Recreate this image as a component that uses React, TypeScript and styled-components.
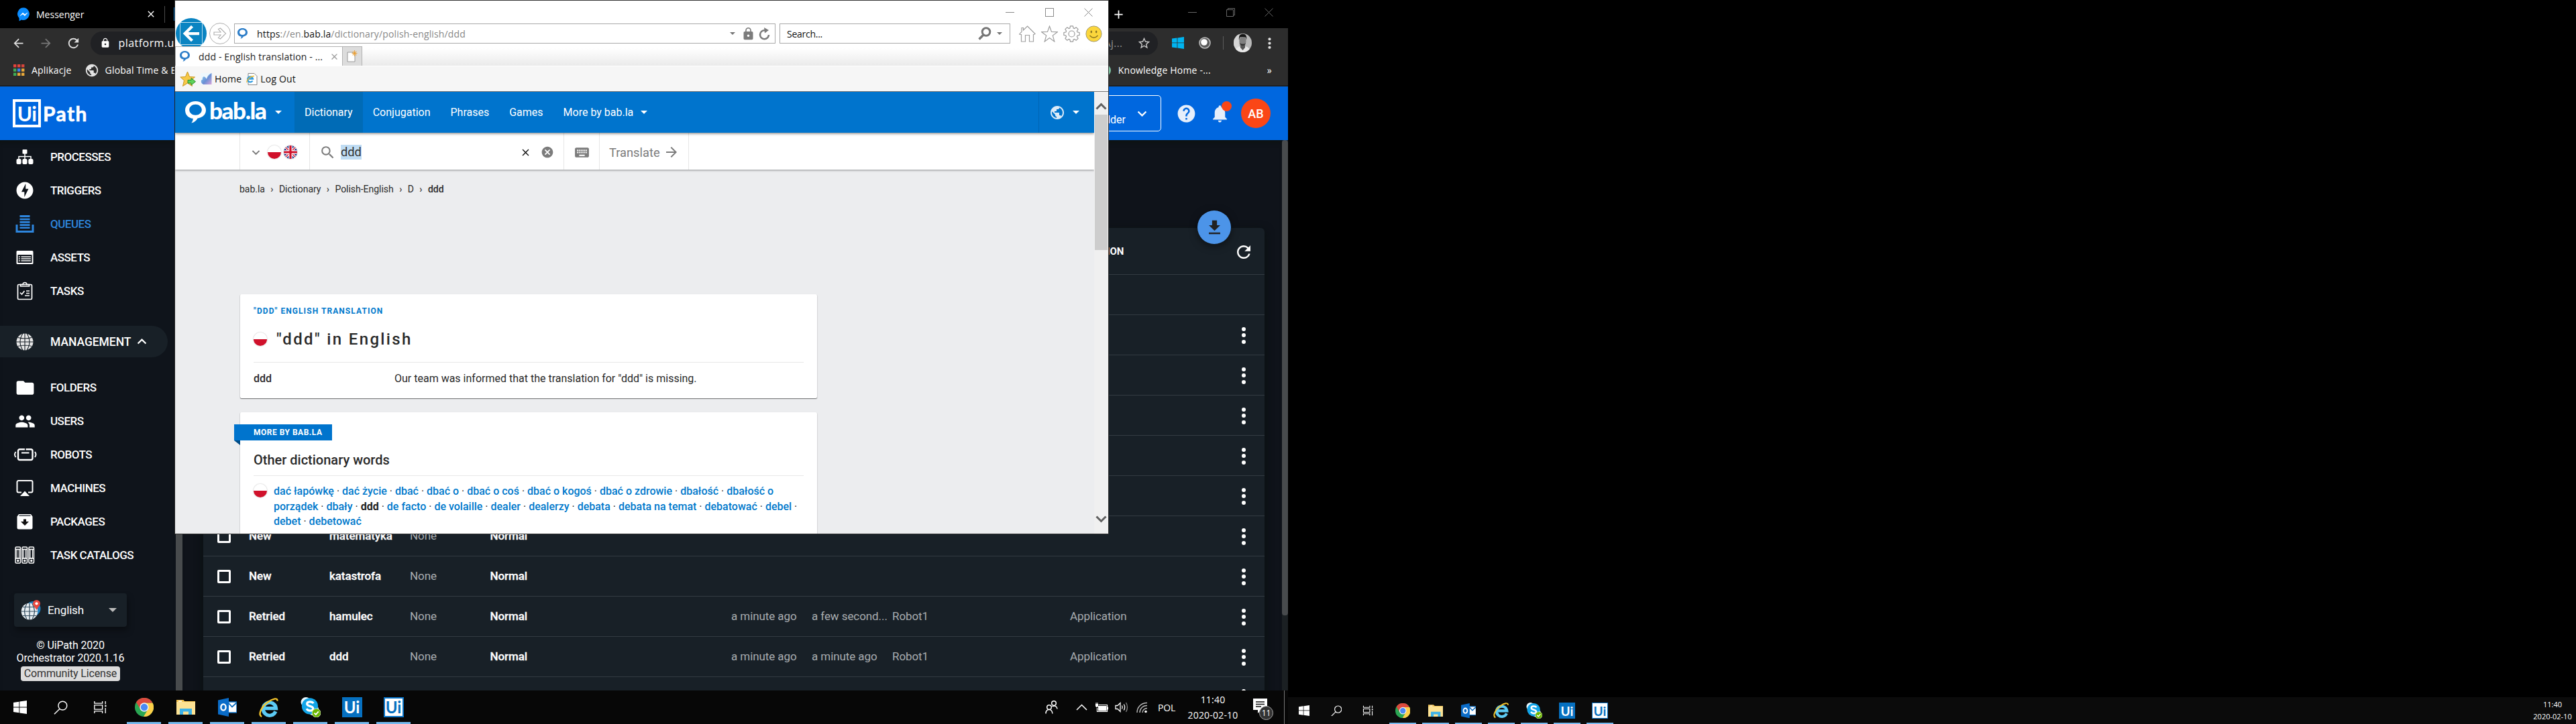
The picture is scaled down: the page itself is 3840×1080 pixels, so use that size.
import React from "react";
import styled, { createGlobalStyle, css } from "styled-components";
import {
  MdPublic,
  MdKeyboard,
  MdSearch,
  MdCancel,
  MdClose,
  MdArrowForward,
  MdArrowBack,
  MdKeyboardArrowDown,
  MdKeyboardArrowUp,
  MdHelp,
  MdNotifications,
  MdFolder,
  MdPeople,
  MdRefresh,
  MdGetApp,
  MdLock,
  MdStarBorder,
  MdMoreVert,
  MdOfflineBolt,
  MdAdd,
} from "react-icons/md";

const roboto = `Roboto, "Liberation Sans", sans-serif`;
const segoe = `"Open Sans", "Noto Sans", sans-serif`;

const GlobalStyle = createGlobalStyle`
  *, *::before, *::after { box-sizing: border-box; }
  body { margin: 0; background: #000; overflow: hidden; }
  svg { display: block; flex: none; }
`;

/* ---------- desktop ---------- */

const Desktop = styled.div`
  display: flex;
  width: 3840px;
  height: 1080px;
  background: #000;
  font-family: ${roboto};
  white-space: nowrap;
  cursor: default;
`;

const Monitor = styled.div`
  position: relative;
  display: flex;
  flex-direction: column;
  justify-content: flex-end;
  width: 1920px;
  height: 1080px;
  overflow: hidden;
`;

/* ---------- chrome window ---------- */

const ChromeWindow = styled.div`
  display: flex;
  flex-direction: column;
  height: 1030px;
  background: #0f131a;
  color: #fff;
`;

const ChromeTitle = styled.div`
  display: flex;
  align-items: center;
  height: 42px;
  background: #000;
  font: 14px ${segoe};
`;

const ChromeTab = styled.div`
  display: flex;
  align-items: center;
  width: 246px;
  height: 25px;
  padding-left: 26px;
  border-right: 1px solid #4a4a4a;
  svg:last-child {
    margin-left: auto;
    margin-right: 12px;
  }
`;

const TabLabel = styled.span`
  margin-left: 9px;
`;

const TabFavicon = styled.div`
  width: 16px;
  height: 20px;
  margin-left: 13px;
  background: #0a78c8;
`;

const NewTab = styled.div`
  display: flex;
  margin-left: auto;
  width: 92px;
`;

const ChromeControls = styled.div`
  display: flex;
  align-items: center;
  width: 171px;
  height: 36px;
  align-self: flex-start;
  justify-content: space-around;
  color: #666;
`;

const ChromeToolbar = styled.div`
  display: flex;
  align-items: center;
  height: 44px;
  padding-left: 17px;
  background: #2d2d2d;
  color: #dedede;
`;

const NavIcon = styled.div<{ $dim?: boolean }>`
  width: 40.5px;
  color: ${(p) => (p.$dim ? "#777" : "#dedede")};
`;

const UrlPill = styled.div`
  display: flex;
  align-items: center;
  width: 1591px;
  height: 35px;
  margin-left: -4px;
  padding: 0 10px 0 14px;
  border-radius: 18px;
  background: #202124;
  color: #fff;
  font: 16px ${segoe};
  letter-spacing: 0.45px;
`;

const UrlHost = styled.span`
  margin-left: 12px;
`;

const UrlTail = styled.span`
  margin: 0 21px 0 auto;
  color: #999;
  font-size: 15px;
`;

const Extensions = styled.div`
  display: flex;
  flex: 1;
  align-items: center;
  padding-left: 21px;
`;

const Separator = styled.div`
  width: 1px;
  height: 20px;
  margin: 0 15px 0 18px;
  background: #5c5c5c;
`;

const ExtensionSlot = styled.div<{ $gap: number }>`
  margin-left: ${(p) => p.$gap}px;
`;

const Bookmarks = styled.div`
  display: flex;
  align-items: center;
  height: 43px;
  padding: 0 24px 4px 20px;
  border-bottom: 2px solid #1f1f1f;
  background: #2d2d2d;
  font: 14px ${segoe};
  letter-spacing: 0.2px;
`;

const Bookmark = styled.div<{ $gap?: number; $push?: boolean }>`
  display: flex;
  align-items: center;
  gap: ${(p) => p.$gap ?? 10}px;
  margin-right: 19px;
  ${(p) =>
    p.$push &&
    css`
      margin-left: auto;
      margin-right: 84px;
    `}
`;

const GreenDot = styled.div`
  width: 18px;
  height: 18px;
  border-radius: 50%;
  background: #7cc0a0;
`;

/* ---------- UiPath page ---------- */

const PathHeader = styled.header`
  display: flex;
  align-items: center;
  height: 80px;
  padding: 0 26px 0 19px;
  background: #0067df;
`;

const PathLogo = styled.div`
  display: flex;
  align-items: center;
  color: #fff;
  font: 700 30px/1 Lato, sans-serif;
`;

const PathLogoBox = styled.div`
  display: flex;
  align-items: center;
  justify-content: center;
  width: 42px;
  height: 42px;
  border: 4px solid #fff;
  letter-spacing: -0.6px;
`;

const PathLogoName = styled.span`
  margin-left: 3px;
  font-weight: 700;
  letter-spacing: 1.4px;
  -webkit-text-stroke: 0.6px #fff;
`;

const FolderPicker = styled.div`
  display: flex;
  align-items: center;
  justify-content: flex-end;
  width: 170px;
  height: 54px;
  margin-left: auto;
  padding-right: 14px;
  border: 1px solid #fff;
  border-radius: 5px;
`;

const FolderName = styled.span`
  align-self: flex-end;
  margin: 0 11px 7px 0;
  font-size: 16px;
`;

const HeaderIcon = styled.div<{ $gap: number }>`
  position: relative;
  margin-left: ${(p) => p.$gap}px;
  color: #e6effb;
`;

const BellBadge = styled.div`
  position: absolute;
  top: -3px;
  right: -2px;
  width: 15px;
  height: 15px;
  border-radius: 50%;
  background: #fa4616;
`;

const Avatar = styled.div`
  display: flex;
  align-items: center;
  justify-content: center;
  width: 44px;
  height: 44px;
  margin-left: 16px;
  border-radius: 50%;
  background: #fa4616;
  font-size: 18px;
  font-weight: 500;
`;

const PathBody = styled.div`
  display: flex;
  flex: 1;
  min-height: 0;
`;

const Sidebar = styled.nav`
  width: 262px;
  background: #0f141b;
  box-shadow: inset 0 8px 8px -6px #0b1210;
`;

const NavItem = styled.div<{ $active?: boolean }>`
  display: flex;
  align-items: center;
  height: 50px;
  color: ${(p) => (p.$active ? "#2e86de" : "#fff")};
  font-size: 17px;
  font-weight: 500;
  letter-spacing: -0.5px;
`;

const NavGlyph = styled.div`
  display: flex;
  align-items: center;
  justify-content: center;
  width: 50px;
  margin: 0 13px 0 12px;
`;

const NavGroup = styled(NavItem)`
  width: 250px;
  height: 47px;
  margin: 27px 0 20px;
  border-radius: 0 24px 24px 0;
  background: #182027;
  font-size: 17.5px;
  letter-spacing: -0.05px;
`;

const LanguageBox = styled.div`
  display: flex;
  align-items: center;
  width: 168px;
  height: 50px;
  margin: 32px 0 0 21px;
  padding: 0 15px 0 10px;
  border-radius: 4px;
  background: #182027;
  box-shadow: 2px 6px 10px rgba(0, 0, 0, 0.35);
  font-size: 17px;
  letter-spacing: -0.15px;
`;

const LanguageName = styled.span`
  flex: 1;
  margin-left: 10px;
`;

const Legal = styled.div`
  display: flex;
  flex-direction: column;
  align-items: center;
  width: 210px;
  margin-top: 18px;
  font-size: 16px;
  line-height: 19px;
  letter-spacing: -0.15px;
`;

const License = styled.div`
  margin-top: 3px;
  padding: 0 5px;
  border-radius: 4px;
  background: #dcdcdc;
  color: #333;
  line-height: 22px;
`;

const ScrollTrack = styled.div<{ $w: number; $thumb: number; $round?: boolean }>`
  width: ${(p) => p.$w}px;
  background: #1b2023;
  &::before {
    content: "";
    display: block;
    height: ${(p) => p.$thumb}px;
    border-radius: ${(p) => (p.$round ? "4px" : "0")};
    background: #484b4d;
  }
`;

const Main = styled.main`
  flex: 1;
  padding: 131px 26px 0 31px;
  overflow: hidden;
  box-shadow: inset 0 8px 8px -6px #0b1210;
`;

const TableCard = styled.section`
  position: relative;
  height: 900px;
  border-radius: 6px;
  background: #182027;
  box-shadow: 0 4px 14px rgba(8, 16, 14, 0.8);
`;

const Fab = styled.div`
  position: absolute;
  top: -26px;
  right: 50px;
  display: flex;
  align-items: center;
  justify-content: center;
  width: 50px;
  height: 50px;
  border-radius: 50%;
  background: #4c94e8;
  box-shadow: 0 3px 12px rgba(0, 0, 0, 0.5);
  color: #222;
`;

const rowGrid = css`
  display: grid;
  grid-template-columns: 68px 120px 120px 119.5px 359.5px 120px 120px 265px 1fr 63px;
  align-items: center;
`;

const TableHead = styled.div`
  ${rowGrid}
  height: 70px;
  border-bottom: 1px solid #333b42;
  font-size: 15px;
  font-weight: 700;
`;

const HeadCell = styled.div`
  grid-column: 9;
`;

const HeadRefresh = styled.div`
  display: flex;
  grid-column: 10;
  justify-content: center;
  padding-top: 3px;
`;

const TableRow = styled.div`
  ${rowGrid}
  height: 60px;
  border-bottom: 1px solid #333b42;
  font-size: 17px;
  letter-spacing: -0.08px;
`;

const Check = styled.div`
  width: 20px;
  height: 20px;
  margin-left: 21px;
  border: 3px solid #fff;
  border-radius: 2px;
`;

const Cell = styled.div<{ $strong?: boolean }>`
  padding-bottom: 1px;
  color: ${(p) => (p.$strong ? "#fff" : "#a9adb0")};
  font-weight: ${(p) => (p.$strong ? 500 : 400)};
  -webkit-text-stroke: ${(p) => (p.$strong ? "0.3px #fff" : "0")};
`;

const RowMenu = styled.div`
  display: flex;
  flex-direction: column;
  align-items: center;
  gap: 3.5px;
  padding-top: 1px;
  i {
    width: 6px;
    height: 6px;
    border-radius: 50%;
    background: #fff;
  }
`;

/* ---------- internet explorer window ---------- */

const IeWindow = styled.div`
  position: absolute;
  left: 261px;
  top: 0;
  display: flex;
  flex-direction: column;
  width: 1391px;
  height: 797px;
  border-top: 1px solid #333;
  border-bottom: 1px solid #333;
  background: #fff;
  box-shadow: 1px 0 0 #333, -1px 0 0 #222;
`;

const IeTitle = styled.div`
  display: flex;
  align-items: center;
  justify-content: flex-end;
  gap: 45.5px;
  height: 34px;
  padding-right: 23px;
  color: #8a8a8a;
`;

const IeAddressRow = styled.div`
  display: flex;
  align-items: center;
  height: 34px;
  padding: 0 0 4px 1px;
  font: 14px ${segoe};
  letter-spacing: 0.15px;
`;

const BackButton = styled.div`
  display: flex;
  align-items: center;
  justify-content: center;
  width: 46px;
  height: 46px;
  margin: -8px 4px -8px 0;
  border-radius: 50%;
  background: #0a84c2;
`;

const ForwardButton = styled.div`
  display: flex;
  align-items: center;
  justify-content: center;
  width: 32px;
  height: 32px;
  margin-right: 5px;
  border: 1px solid #b0b0b0;
  border-radius: 50%;
`;

const IeField = styled.div<{ $w: number; $pad: number }>`
  display: flex;
  align-items: center;
  width: ${(p) => p.$w}px;
  height: 30px;
  margin-right: 6px;
  padding-left: ${(p) => p.$pad}px;
  border: 1px solid #aaa;
  color: #111;
`;

const IeUrl = styled.span`
  flex: 1;
  margin-left: 14px;
  color: #888;
  b {
    color: #111;
    font-weight: 400;
  }
`;

const IeHint = styled.span`
  flex: 1;
  letter-spacing: -0.26px;
`;

const IeTools = styled.div`
  display: flex;
  gap: 8px;
  margin-left: 7px;
`;

const IeTabRow = styled.div`
  position: relative;
  display: flex;
  height: 30px;
  border-bottom: 1px solid #fff;
  background: linear-gradient(#fff 10%, #eaeaea);
`;

const IeTab = styled.div`
  display: flex;
  align-items: center;
  width: 250px;
  padding: 0 4px 0 6px;
  border: 1px solid #b3b3b3;
  border-bottom: 0;
  background: #fff;
  color: #222;
  font: 14px ${segoe};
  letter-spacing: 0.14px;
`;

const IeTabText = styled.span`
  flex: 1;
  margin-left: 13px;
`;

const IeNewTab = styled.div`
  display: flex;
  align-items: center;
  justify-content: center;
  width: 29px;
  border: 1px solid #b3b3b3;
  border-left: 0;
  border-bottom: 0;
  background: #dcdcdc;
`;

const IeFavorites = styled.div`
  display: flex;
  align-items: center;
  height: 38px;
  padding-left: 7px;
  border-bottom: 1px solid #777;
  background: #f6f6f6;
  color: #111;
  font: 14px ${segoe};
  letter-spacing: 0.18px;
`;

const FavText = styled.span`
  margin: 0 7px 0 4px;
`;

const IeViewport = styled.div`
  display: flex;
  flex: 1;
  min-height: 0;
`;

const IePage = styled.div`
  flex: 1;
  overflow: hidden;
  background: #ecedef;
  color: #2a2a2a;
`;

const IeScroll = styled.div`
  display: flex;
  flex-direction: column;
  align-items: center;
  width: 21px;
  padding: 15px 0 15px;
  background: #f0f0f0;
`;

const IeThumb = styled.div`
  width: 19px;
  height: 202px;
  margin: 6px 0 auto;
  background: #cdcdcd;
`;

const LockGap = styled.div`
  margin: 0 5px 0 9px;
  color: #7c7c7c;
`;

const Spacer = styled.i<{ $w: number }>`
  flex: none;
  width: ${(p) => p.$w}px;
`;

/* ---------- bab.la page ---------- */

const BabNav = styled.div`
  position: relative;
  z-index: 2;
  display: flex;
  height: 61px;
  background: #0074cd;
  box-shadow: 0 1px 4px rgba(0, 0, 0, 0.55);
  color: #fff;
`;

const BabBrand = styled.div`
  display: flex;
  align-items: center;
  width: 178px;
  padding-left: 15px;
`;

const BabName = styled.span`
  flex: 1;
  margin: -6px 0 0 5px;
  font: 900 35px/1 Lato, sans-serif;
  letter-spacing: -1.4px;
`;

const BabLink = styled.div<{ $active?: boolean }>`
  display: flex;
  align-items: center;
  gap: 11px;
  padding: 0 15px;
  background: ${(p) => (p.$active ? "#006bb6" : "none")};
  font-size: 16px;
`;

const BabLocale = styled.div`
  display: flex;
  align-items: center;
  gap: 11px;
  width: 83px;
  margin-left: auto;
  padding-left: 15px;
  border-left: 1px solid #0064b4;
`;

const Triangle = styled.i<{ $c?: string; $s?: number; $end?: number }>`
  display: block;
  margin-right: ${(p) => p.$end ?? 0}px;
  border: ${(p) => p.$s ?? 5}px solid transparent;
  border-top-color: ${(p) => p.$c ?? "#fff"};
  border-bottom: 0;
`;

const SearchRow = styled.div`
  position: relative;
  display: flex;
  height: 55px;
  padding-left: 96px;
  background: #fff;
  box-shadow: 0 1px 3px rgba(0, 0, 0, 0.4);
`;

const SearchCell = styled.div<{ $w: number; $pad: number }>`
  display: flex;
  align-items: center;
  width: ${(p) => p.$w}px;
  padding: 3px 0 0 ${(p) => p.$pad}px;
  border-left: 1px solid #e6e6e6;
  color: #7c7c7c;
  font-size: 18.3px;
`;

const Selected = styled.span`
  flex: 1;
  margin-left: 7px;
  color: #333;
  span {
    display: inline-block;
    background: #bfdcf3;
    line-height: 22px;
  }
`;

const Flag = styled.svg`
  border-radius: 50%;
  box-shadow: 0 0 2px rgba(0, 0, 0, 0.35);
`;

const Crumbs = styled.div`
  display: flex;
  padding: 20px 0 0 96px;
  font-size: 14px;
  line-height: 18px;
  letter-spacing: -0.02px;
  span + span::before {
    content: "›";
    margin: 0 8.4px;
  }
  span:last-child {
    font-weight: 500;
  }
`;

const Card = styled.section<{ $top: number; $h: number }>`
  width: 860px;
  height: ${(p) => p.$h}px;
  margin: ${(p) => p.$top}px 0 0 97px;
  padding: 0 20px;
  border-radius: 2px;
  background: #fff;
  box-shadow: 0 1px 1px rgba(0, 0, 0, 0.4), 0 1px 2px rgba(0, 0, 0, 0.2);
`;

const CardTag = styled.div`
  padding-top: 17px;
  color: #0079cc;
  font-size: 12px;
  font-weight: 700;
  line-height: 16px;
  letter-spacing: 1.07px;
`;

const CardTitle = styled.h1`
  display: flex;
  align-items: center;
  gap: 14px;
  height: 69px;
  margin: 0;
  border-bottom: 1px solid #e8e8e8;
  font-size: 24px;
  font-weight: 500;
  letter-spacing: 2.35px;
`;

const Definition = styled.div`
  display: grid;
  grid-template-columns: 210px 1fr;
  padding-top: 14px;
  font-size: 16px;
  line-height: 20px;
  b {
    font-weight: 500;
  }
`;

const Ribbon = styled.div`
  position: relative;
  width: 146px;
  height: 24px;
  margin: 18px 0 0 -29px;
  padding-left: 29px;
  background: #0074cd;
  color: #fff;
  font-size: 12px;
  font-weight: 700;
  line-height: 24px;
  letter-spacing: 0.5px;
  &::after {
    content: "";
    position: absolute;
    left: 0;
    top: 24px;
    border-top: 7px solid #004c86;
    border-left: 9px solid transparent;
  }
`;

const RibbonCard = styled(Card)`
  display: flow-root;
`;

const WordsTitle = styled.h2`
  height: 53px;
  margin: 0;
  padding-top: 17px;
  border-bottom: 1px solid #e8e8e8;
  font-size: 20px;
  font-weight: 500;
  line-height: 24px;
`;

const WordList = styled.div`
  display: grid;
  grid-template-columns: 30px 1fr;
  padding-top: 12px;
  font-size: 16px;
  line-height: 22.7px;
`;

const Word = styled.span<{ $current?: boolean }>`
  color: ${(p) => (p.$current ? "#222" : "#0079cc")};
  font-weight: ${(p) => (p.$current ? 700 : 500)};
`;

/* ---------- taskbar ---------- */

const Taskbar = styled.div<{ $small?: boolean }>`
  display: flex;
  height: ${(p) => (p.$small ? 40 : 50)}px;
  background: ${(p) => (p.$small ? "#0b0b0b" : "#070707")};
  color: #fff;
  font-family: ${segoe};
`;

const SystemButton = styled.div<{ $small?: boolean }>`
  display: flex;
  align-items: center;
  justify-content: center;
  width: ${(p) => (p.$small ? 48 : 60)}px;
  &:nth-child(3) {
    width: ${(p) => (p.$small ? 46 : 58)}px;
  }
`;

const AppButton = styled.div<{ $small?: boolean }>`
  display: flex;
  align-items: center;
  justify-content: center;
  width: ${(p) => (p.$small ? 40 : 51)}px;
  margin-left: ${(p) => (p.$small ? 9 : 11)}px;
  border-bottom: ${(p) => (p.$small ? 2 : 3)}px solid #76b9ed;
  padding-top: ${(p) => (p.$small ? 2 : 3)}px;
`;

const UiTile = styled.div<{ $small?: boolean; $light?: boolean }>`
  display: flex;
  align-items: center;
  justify-content: center;
  width: ${(p) => (p.$small ? 24 : 30)}px;
  height: ${(p) => (p.$small ? 24 : 30)}px;
  border: ${(p) => (p.$light ? (p.$small ? 1.5 : 2) : 0)}px solid #0a74c8;
  background: ${(p) => (p.$light ? "#fff" : "#0670c0")};
  color: ${(p) => (p.$light ? "#0670c0" : "#fff")};
  font: 700 ${(p) => (p.$small ? 19 : 24)}px/1 Lato, sans-serif;
`;

const Tray = styled.div`
  display: flex;
  align-items: center;
  margin-left: auto;
  font-size: 14px;
`;

const TrayIcon = styled.div<{ $gap: number }>`
  margin-left: ${(p) => p.$gap}px;
`;

const InputLang = styled.div`
  margin-left: 15px;
  letter-spacing: -0.2px;
`;

const Clock = styled.div<{ $small?: boolean }>`
  width: ${(p) => (p.$small ? 70 : 112)}px;
  font-size: ${(p) => (p.$small ? 11 : 14)}px;
  line-height: ${(p) => (p.$small ? 18 : 23)}px;
  letter-spacing: ${(p) => (p.$small ? 0 : 0.2)}px;
  text-align: center;
`;

const Notifications = styled.div`
  position: relative;
  width: 46px;
  margin-top: -4px;
`;

const NotifCount = styled.div`
  position: absolute;
  left: 9px;
  top: 11px;
  width: 21px;
  height: 21px;
  border: 1px solid #aaa;
  border-radius: 50%;
  background: #333;
  font-size: 12px;
  line-height: 19px;
  text-align: center;
`;

const ShowDesktop = styled.div`
  align-self: stretch;
  width: 6px;
  border-left: 1px solid #777;
`;

/* ---------- icons ---------- */

const MessengerIcon = () => (
  <svg width="19" height="21" viewBox="0 0 19 21">
    <path d="M9.5 0.5A9 9.3 0 0 0 2.6 16.2V20.5L6 18.6A9 9.3 0 1 0 9.5 .5z" fill="#0a8cff" />
    <path d="M4 12.5 8 8l3 2.6L15 8l-4 4.7-3-2.7z" fill="#fff" stroke="#fff" strokeWidth=".6" />
  </svg>
);

const AppsIcon = () => {
  const c = ["#e5433b", "#e5433b", "#d8453c", "#3fae55", "#3b82f0", "#e8a93a", "#3fae55", "#e8a93a", "#e8a93a"];
  return (
    <svg width="17" height="17" viewBox="0 0 17 17">
      {c.map((f, i) => (
        <rect key={i} x={(i % 3) * 6} y={Math.floor(i / 3) * 6.3} width="4.4" height="4.4" fill={f} />
      ))}
    </svg>
  );
};

const WinLogo = ({ s, c = "#fff" }: { s: number; c?: string }) => (
  <svg width={s} height={s} viewBox="0 0 20 20" fill={c}>
    <path d="M0 2.9 8.4 1.7V9.5H0zM9.3 1.6 20 0V9.5H9.3zM0 10.4H8.4V18.3L0 17.1zM9.3 10.4H20V20L9.3 18.4z" />
  </svg>
);

const OrbIcon = () => (
  <svg width="18" height="18" viewBox="0 0 18 18">
    <circle cx="9" cy="9" r="8" fill="#5b5b5b" stroke="#b8b8b8" strokeWidth="1.6" />
    <circle cx="8" cy="8" r="4.8" fill="#fff" />
  </svg>
);

const PhotoIcon = () => (
  <svg width="27" height="28" viewBox="0 0 27 28">
    <defs>
      <clipPath id="photo">
        <ellipse cx="13.5" cy="14" rx="13.5" ry="14" />
      </clipPath>
    </defs>
    <g clipPath="url(#photo)">
      <rect width="27" height="28" fill="#b9b9b9" />
      <rect width="8" height="28" fill="#d5d5d5" />
      <path d="M2 28c0-6 4-8 8-9l3 3 4-3c4 1 8 3 8 9z" fill="#e8e8e8" />
      <path d="M10 16h7v5l-3.5 4L10 21z" fill="#555" />
      <ellipse cx="13.5" cy="11.5" rx="5" ry="7.5" fill="#808080" />
      <path d="M8 10C7 2 11 .5 14 .8c4 0 6 3 5 9l-1-4c-3-1-7-1-9 0z" fill="#151515" />
      <path d="M9 14c1 6 8 6 9 0-1 2-7 2-9 0z" fill="#333" />
    </g>
  </svg>
);

const BabBubble = ({ w, c }: { w: number; c: string }) => (
  <svg width={w} height={(w * 33) / 31} viewBox="0 0 31 33">
    <path
      fill={c}
      fillRule="evenodd"
      d="M15.5 0C24 0 31 5.6 31 13.2 31 21 24.500 24.500 18.500 25.600 17 28.500 14 31.600 9.200 32.600 11 30.500 11.800 28 11.600 25.800 5 25 0 20.500 0 13.200 0 5.600 7 0 15.500 0zM15.500 4.700C10.500 4.700 6.200 8 6.200 12.800c0 4.700 4.300 8 9.300 8s9.300-3.300 9.300-8c0-4.800-4.300-8.100-9.300-8.100z"
    />
  </svg>
);

const PlFlag = () => (
  <Flag width="20" height="20" viewBox="0 0 20 20">
    <rect width="20" height="20" fill="#fff" />
    <rect y="10" width="20" height="10" fill="#d0112b" />
  </Flag>
);

const UkFlag = () => (
  <Flag width="20" height="20" viewBox="0 0 20 20">
    <rect width="20" height="20" fill="#1c2f83" />
    <path d="M0 0 20 20M20 0 0 20" stroke="#fff" strokeWidth="3.6" />
    <path d="M0 0 20 20M20 0 0 20" stroke="#d0112b" strokeWidth="1.3" />
    <path d="M10 0V20M0 10H20" stroke="#fff" strokeWidth="5.6" />
    <path d="M10 0V20M0 10H20" stroke="#d0112b" strokeWidth="3.2" />
  </Flag>
);

const ProcessesIcon = () => (
  <svg width="26" height="24" viewBox="0 0 26 24" fill="#fff">
    <rect x="9.5" y="1" width="7" height="6.5" rx="1" />
    <rect x="0.5" y="15" width="7.2" height="8" rx="2" />
    <rect x="9.4" y="15" width="7.2" height="8" rx="2" />
    <rect x="18.3" y="15" width="7.2" height="8" rx="2" />
    <path d="M13 7v8M4 15.5V11.5H22V15.5" fill="none" stroke="#fff" strokeWidth="1.5" />
  </svg>
);

const QueuesIcon = () => (
  <svg width="28" height="28" viewBox="0 0 28 28" fill="#2e86de">
    <path d="M6.500 1H21.500v3H6.500zM6.500 5.700H21.500v2.700H6.500zM6.500 10H21.500v2.700H6.500zM6.500 14.300H21.500v2.700H6.500zM6.500 18.600H21.500v2.400H6.500z" />
    <path d="M2 15V25.500H26V15" fill="none" stroke="#2e86de" strokeWidth="3" />
  </svg>
);

const AssetsIcon = () => (
  <svg width="26" height="22" viewBox="0 0 26 22">
    <path
      fill="#fff"
      fillRule="evenodd"
      d="M2 1h22a1.500 1.500 0 0 1 1.500 1.500v17A1.500 1.500 0 0 1 24 21H2A1.500 1.500 0 0 1 .5 19.500v-17A1.500 1.500 0 0 1 2 1zM2.500 7v12h21V7z"
    />
    <path d="M4 10h1.800M4 13h1.800M4 16h1.800M7.500 10H22M7.500 13H22M7.500 16H22" stroke="#fff" strokeWidth="1.3" />
  </svg>
);

const TasksIcon = () => (
  <svg width="24" height="28" viewBox="0 0 24 28" fill="none" stroke="#fff" strokeWidth="1.7">
    <rect x="1.5" y="4.5" width="21" height="22" rx="1.5" />
    <path d="M5.500 7V4.500H9a3 3 0 0 1 6 0h3.500V7z" />
    <path d="M5 16.500 7.500 19 11.500 14M14 14h5M14 17.500h5M12 21h7" />
  </svg>
);

const GlobeIcon = () => (
  <svg width="26" height="26" viewBox="0 0 26 26">
    <circle cx="13" cy="13" r="12.5" fill="#e6e6e6" />
    <path
      d="M13 0V26M0 13H26M2.500 6.500Q13 9.500 23.500 6.500M2.500 19.500Q13 16.500 23.500 19.500M10 .5Q2 13 10 25.500M16 .5Q24 13 16 25.500"
      fill="none"
      stroke="#182027"
      strokeWidth="1.1"
    />
  </svg>
);

const RobotIcon = () => (
  <svg width="35" height="20" viewBox="0 0 35 20" fill="none" stroke="#fff" strokeWidth="2.4">
    <rect x="7" y="2.2" width="21.5" height="15.8" rx="2.5" />
    <path d="M12 7.500H23.500" strokeWidth="2" />
    <path d="M3.500 6Q.5 10 3.500 14M32 6Q35 10 32 14" strokeWidth="1.9" />
    <path d="M17.700 0V4" stroke="#0f141b" strokeWidth="1.5" />
  </svg>
);

const MachinesIcon = () => (
  <svg width="26" height="26" viewBox="0 0 26 26">
    <path d="M8 19.500H3.500A2 2 0 0 1 1.500 17.500V4A2 2 0 0 1 3.500 2H22.500A2 2 0 0 1 24.500 4V17.500A2 2 0 0 1 22.500 19.500H18" fill="none" stroke="#fff" strokeWidth="2" />
    <path d="M13 17.500 20 25H6z" fill="#fff" />
  </svg>
);

const PackagesIcon = () => (
  <svg width="24" height="24" viewBox="0 0 24 24">
    <path d="M3 1H21L23.500 4.500V21a2.500 2.500 0 0 1-2.500 2.500H3A2.500 2.500 0 0 1 .5 21V4.500z" fill="#fff" />
    <path d="M3.500 3.200H20.500" stroke="#182027" strokeWidth="1.2" />
    <path d="M10 8.500h4v3.500h4L12 18 6 12h4z" fill="#111" />
  </svg>
);

const CatalogsIcon = () => (
  <svg width="30" height="26" viewBox="0 0 30 26" fill="none" stroke="#fff" strokeWidth="1.5">
    {[1, 11, 21].map((x) => (
      <g key={x}>
        <rect x={x} y="1" width="7.5" height="24" rx="1.5" />
        <path d={`M${x} 4.500h7.500M${x} 18h7.500`} />
        <rect x={x + 2} y="4.5" width="3.5" height="13" strokeWidth="1.2" />
        <circle cx={x + 3.75} cy="21.4" r="1" />
      </g>
    ))}
  </svg>
);

const LanguageIcon = () => (
  <svg width="30" height="30" viewBox="0 0 30 30">
    <circle cx="18.5" cy="13" r="11" fill="#1d7fc0" />
    <circle cx="13" cy="17" r="12.3" fill="#e8eef2" />
    <path d="M13 5V29M1 17H25M3 10.500H22M3 23.500H23M9 5.500Q2 17 9 28.500M17 5.500Q24 17 17 28.500" fill="none" stroke="#314a5c" strokeWidth="1.2" />
    <path d="M23.500 15C20 9 18 8 18 5.300a5.500 5.300 0 0 1 11 0C29 8 27 9 23.500 15z" fill="#e8483f" />
    <circle cx="23.5" cy="5.3" r="2.1" fill="#fff" />
  </svg>
);

const MinIcon = () => (
  <svg width="13" height="13" viewBox="0 0 13 13" stroke="currentColor">
    <path d="M0 6.500H13" />
  </svg>
);
const MaxIcon = () => (
  <svg width="13" height="13" viewBox="0 0 13 13" stroke="currentColor" fill="none">
    <rect x=".5" y=".5" width="12" height="12" />
  </svg>
);
const RestoreIcon = () => (
  <svg width="13" height="13" viewBox="0 0 13 13" stroke="currentColor" fill="none">
    <path d="M.5 2.500H10.500V12.500H.5zM2.500 2.500V.5H12.500V10.500H10.500" />
  </svg>
);
const CrossIcon = () => (
  <svg width="13" height="13" viewBox="0 0 13 13" stroke="currentColor">
    <path d="M.5.5 12.500 12.500M12.500.5.5 12.500" />
  </svg>
);

const LensIcon = () => (
  <svg width="20" height="20" viewBox="0 0 20 20" fill="none" stroke="#777">
    <circle cx="12" cy="7.5" r="5.8" strokeWidth="3" />
    <path d="M8 12 1.500 18.500" strokeWidth="3.4" />
  </svg>
);

const ReloadIcon = () => (
  <svg width="17" height="19" viewBox="0 0 17 19" fill="none">
    <path d="M9 4.300A6.500 6.500 0 1 0 15 11" stroke="#7c7c7c" strokeWidth="2.6" />
    <path d="M8 0 15 4 9 8.500z" fill="#7c7c7c" />
  </svg>
);

const HomeOutline = () => (
  <svg width="25" height="25" viewBox="0 0 25 25" fill="none" stroke="#a0a0a0" strokeWidth="1.2">
    <path d="M12.500 1 24 12.500 22.500 13.500H21.500V24H15.500V14.500H9.500V24H3.500V13.500H1L.8 12.600 4 9.500V3.500H6.500V7z" />
  </svg>
);
const StarOutline = () => (
  <svg width="25" height="25" viewBox="0 0 25 25" fill="none" stroke="#a0a0a0" strokeWidth="1.2">
    <path d="M12.500 1 15.500 9.500 24.300 9.700 17.300 15 19.800 24 12.500 18.600 5.200 24 7.700 15 .7 9.700 9.500 9.500z" />
  </svg>
);
const GearOutline = () => {
  const pts: string[] = [];
  for (let i = 0; i < 8; i++) {
    const a = (i * Math.PI) / 4;
    [[-0.29, 9], [-0.17, 11.8], [0.17, 11.8], [0.29, 9]].forEach(([d, r]) =>
      pts.push(`${(12.5 + r * Math.sin(a + d)).toFixed(2)},${(12.5 - r * Math.cos(a + d)).toFixed(2)}`)
    );
  }
  return (
    <svg width="25" height="25" viewBox="0 0 25 25" fill="none" stroke="#999" strokeWidth="1.2">
      <polygon points={pts.join(" ")} strokeLinejoin="round" />
      <circle cx="12.5" cy="12.5" r="4.5" />
    </svg>
  );
};
const SmileyIcon = () => (
  <svg width="25" height="25" viewBox="0 0 25 25">
    <circle cx="12.5" cy="12.5" r="11.6" fill="#fbd63c" stroke="#a39a70" />
    <ellipse cx="8.8" cy="9.5" rx="1.2" ry="2" fill="#8a7420" />
    <ellipse cx="16.2" cy="9.5" rx="1.2" ry="2" fill="#8a7420" />
    <path d="M6.500 15Q12.500 21.500 18.500 15" fill="none" stroke="#8a7420" strokeWidth="1.4" />
  </svg>
);

const ForwardOutline = () => (
  <svg width="20" height="18" viewBox="0 0 20 18" fill="none" stroke="#b0b0b0" strokeWidth="1.2">
    <path d="M1 7H11L7.500 2.500 10.500 1 18.500 9 10.500 17 7.500 15.500 11 11H1z" />
  </svg>
);

const NewTabIcon = () => (
  <svg width="16" height="18" viewBox="0 0 16 18">
    <path d="M1 3H8L12 7V17H1z" fill="#fff" stroke="#999" />
    <path d="M11.500 0V9M7.500 4.500H15.500M8.700 1.700 14.300 7.300M14.300 1.700 8.700 7.300" stroke="#e8a13c" strokeWidth="1.1" />
  </svg>
);

const FavStar = () => (
  <svg width="24" height="24" viewBox="0 0 24 24">
    <path d="M11.500 1 14.500 8.500 22.500 9 16.500 14 18.500 22.500 11.500 18 4.500 22.500 6.500 14 .8 9 8.500 8.500z" fill="#f7c948" stroke="#c99722" />
    <path d="M12 13.500h5V10.500L23.500 15.700 17 21V18H12z" fill="#5fd35a" stroke="#2c8f2e" />
  </svg>
);
const HomeLink = () => (
  <svg width="17" height="17" viewBox="0 0 17 17">
    <defs>
      <linearGradient id="petal" x1="0" y1="0" x2="1" y2="1">
        <stop offset="0" stopColor="#8fdcf8" />
        <stop offset=".55" stopColor="#6a8fd4" />
        <stop offset="1" stopColor="#d9a6dc" />
      </linearGradient>
    </defs>
    <rect width="17" height="17" fill="#eef8fd" />
    <path d="M16.500 0V17H4C0 15 0 10 3 9.500 2 6 5 2 9 9 10 5 12 2 16.500 0z" fill="url(#petal)" />
  </svg>
);
const IePageIcon = () => (
  <svg width="17" height="18" viewBox="0 0 17 18">
    <path d="M3 .5H12L16 4.500V17.500H3z" fill="#fff" stroke="#888" />
    <path d="M9.500 11.500A4 4 0 1 1 10 8.500H3" fill="none" stroke="#2e9be0" strokeWidth="2.3" />
    <path d="M1 14C0 10 7 4 12 4.500" fill="none" stroke="#f0b92c" strokeWidth="1.4" />
  </svg>
);

const ScrollChevron = ({ up }: { up?: boolean }) => (
  <svg width="17" height="13" viewBox="0 0 17 13">
    <path d={up ? "M1.500 10.500 8.500 3.500 15.500 10.500" : "M1.500 2.500 8.500 9.500 15.500 2.500"} fill="none" stroke="#606060" strokeWidth="3" />
  </svg>
);

/* taskbar glyphs */

type Sized = { s: number };
const TaskSearch = ({ s }: Sized) => (
  <svg width={s} height={s} viewBox="0 0 22 22" fill="none" stroke="#fff" strokeWidth="1.5">
    <circle cx="14" cy="8" r="6.7" />
    <path d="M9.300 13 1 21.300" />
  </svg>
);
const TaskView = ({ s }: Sized) => (
  <svg width={s} height={s} viewBox="0 0 22 22" fill="none" stroke="#fff" strokeWidth="1.5">
    <path d="M2 1V4.500H15V1M2 21V17.500H15V21M2 7.500H15V14.500H2zM20 1V6M20 12V21" />
    <rect x="19" y="7.5" width="2.4" height="2.6" fill="#fff" stroke="none" />
  </svg>
);
const ChromeIcon = ({ s }: Sized) => (
  <svg width={s} height={s} viewBox="2 2 28 28">
    <circle cx="16" cy="16" r="14" fill="#2aa653" />
    <path d="M16 9.600H28.450A14 14 0 0 1 15 30L21.500 19.200z" fill="#fdd049" />
    <path d="M28.450 9.600A14 14 0 0 0 4 8.600L10.460 19.200 16 9.600z" fill="#dc4a3e" />
    <circle cx="16" cy="16" r="6.7" fill="#f4f4f4" />
    <circle cx="16" cy="16" r="5.2" fill="#4a8af4" />
  </svg>
);
const FolderIcon = ({ s }: Sized) => (
  <svg width={s} height={s} viewBox="0 0 28 28">
    <path d="M0 3H10L12 5H28V25H0z" fill="#fde293" />
    <path d="M0 3H10L12 5H28V6H0z" fill="#f2c14c" />
    <path d="M3 5H8" stroke="#fff" strokeWidth="1.5" />
    <path d="M5 25V16H23V25H18V20.500H10V25z" fill="#3db2e8" />
  </svg>
);
const OutlookIcon = ({ s }: Sized) => (
  <svg width={s} height={s} viewBox="0 0 28 28">
    <path d="M14 6H28V22H14z" fill="#fff" stroke="#0a6cc0" strokeWidth="1.5" />
    <path d="M15 7 21 13.500 28 7" fill="none" stroke="#0a6cc0" strokeWidth="1.8" />
    <path d="M0 3.500 16 0V28L0 24.500z" fill="#0a6cc8" />
    <ellipse cx="8" cy="14" rx="3.6" ry="4.6" fill="none" stroke="#fff" strokeWidth="2.4" />
  </svg>
);
const IeIcon = ({ s }: Sized) => (
  <svg width={s} height={s} viewBox="0 0 28 28" fill="none">
    <path d="M24 19.500A9.300 9.300 0 1 1 24.600 15H8" stroke="#5ccbf5" strokeWidth="5" />
    <path d="M4 27C-2 24 4 12 13 6 19 1.500 27 -1 26.500 4.500" stroke="#f5c52c" strokeWidth="2.3" />
  </svg>
);
const SkypeIcon = ({ s }: Sized) => (
  <svg width={s} height={s} viewBox="0 0 28 28">
    <circle cx="7.5" cy="7" r="7" fill="#e9f7fd" />
    <circle cx="18" cy="18" r="7.5" fill="#e9f7fd" />
    <circle cx="13" cy="12.5" r="11.3" fill="#12a5e8" />
    <path d="M18 8.500C16 5.500 9 5.500 9 9.300 9 13.500 17.500 11.500 17.500 15.800 17.500 20 10 19.500 8.500 16" fill="none" stroke="#fff" strokeWidth="3" />
    <circle cx="22" cy="22" r="6" fill="#6bb700" stroke="#dff0c0" strokeWidth=".8" />
    <path d="M19 22 21.300 24.200 25 20" fill="none" stroke="#fff" strokeWidth="1.7" />
  </svg>
);

const PeopleTray = () => (
  <svg width="19" height="20" viewBox="0 0 19 20" fill="none" stroke="#fff" strokeWidth="1.5">
    <circle cx="13" cy="4" r="3.3" />
    <circle cx="6" cy="10" r="3.3" />
    <path d="M1 19.500C1 15.500 3 13.500 6 13.500S10.500 15.500 11 19.500M10.500 9C14 6.500 17.500 8.500 18 12.500" />
  </svg>
);
const ChevronTray = () => (
  <svg width="17" height="10" viewBox="0 0 17 10" fill="none" stroke="#fff" strokeWidth="1.5">
    <path d="M1 9 8.500 1.500 16 9" />
  </svg>
);
const BatteryTray = () => (
  <svg width="20" height="15" viewBox="0 0 20 15">
    <path d="M5.500 3.500H18.500V13.500H3.500V8" fill="none" stroke="#fff" strokeWidth="1.2" />
    <rect x="5" y="5" width="12.5" height="7.5" fill="#fff" />
    <path d="M18.500 6.500H20V10.500H18.500zM1 2H5V5.500L3.500 7H2.500L1 5.500z" fill="#fff" />
    <path d="M2 0V2M4 0V2" stroke="#fff" />
  </svg>
);
const VolumeTray = () => (
  <svg width="20" height="18" viewBox="0 0 20 18" fill="none" stroke="#fff" strokeWidth="1.3">
    <path d="M1 6.500H4L8 2.500V15.500L4 11.500H1zM10.500 6.500Q12 9 10.500 11.500M13.300 4.500Q16 9 13.300 13.500" />
    <path d="M16.500 2Q20.500 9 16.500 16" stroke="#888" />
  </svg>
);
const WifiTray = () => (
  <svg width="17" height="17" viewBox="0 0 17 17" fill="none" stroke="#bbb" strokeWidth="1.4">
    <path d="M1 16C1 8 7 1.500 16 1.500M5 16C5 10.500 9 5.500 16 5.500M9 16C9 12.500 12 9.500 16 9.500" />
    <circle cx="14" cy="14.5" r="1.8" fill="#fff" stroke="none" />
  </svg>
);
const NotifTray = () => (
  <svg width="21" height="22" viewBox="0 0 21 22">
    <path d="M0 0H21V17H12L7 22V17H0z" fill="#fff" />
    <path d="M4 5H17M4 8.500H17M4 12H12" stroke="#111" strokeWidth="1.3" />
  </svg>
);

/* ---------- data ---------- */

const primaryNav = [
  { label: "PROCESSES", icon: <ProcessesIcon /> },
  { label: "TRIGGERS", icon: <MdOfflineBolt size={30} /> },
  { label: "QUEUES", icon: <QueuesIcon />, active: true },
  { label: "ASSETS", icon: <AssetsIcon /> },
  { label: "TASKS", icon: <TasksIcon /> },
];

const managementNav = [
  { label: "FOLDERS", icon: <MdFolder size={31} /> },
  { label: "USERS", icon: <MdPeople size={31} /> },
  { label: "ROBOTS", icon: <RobotIcon /> },
  { label: "MACHINES", icon: <MachinesIcon /> },
  { label: "PACKAGES", icon: <PackagesIcon /> },
  { label: "TASK CATALOGS", icon: <CatalogsIcon /> },
];

type Row = { status?: string; reference?: string; started?: string; ended?: string; robot?: string; exception?: string };
const rows: Row[] = [
  {},
  {},
  {},
  {},
  {},
  { status: "New", reference: "matematyka" },
  { status: "New", reference: "katastrofa" },
  { status: "Retried", reference: "hamulec", started: "a minute ago", ended: "a few second...", robot: "Robot1", exception: "Application" },
  { status: "Retried", reference: "ddd", started: "a minute ago", ended: "a minute ago", robot: "Robot1", exception: "Application" },
  {},
];

const wordLines = [
  ["dać łapówkę", "dać życie", "dbać", "dbać o", "dbać o coś", "dbać o kogoś", "dbać o zdrowie", "dbałość", "dbałość o"],
  ["porządek", "dbały", "ddd", "de facto", "de volaille", "dealer", "dealerzy", "debata", "debata na temat", "debatować", "debel"],
  ["debet", "debetować"],
];

const KebabMenu = () => (
  <RowMenu>
    <i />
    <i />
    <i />
  </RowMenu>
);

const TaskbarApps = ({ small }: { small?: boolean }) => {
  const k = small ? 0.8 : 1;
  return (
    <>
      <SystemButton $small={small}><WinLogo s={20 * k} /></SystemButton>
      <SystemButton $small={small}><TaskSearch s={21 * k} /></SystemButton>
      <SystemButton $small={small}><TaskView s={20 * k} /></SystemButton>
      <AppButton $small={small}><ChromeIcon s={28 * k} /></AppButton>
      <AppButton $small={small}><FolderIcon s={28 * k} /></AppButton>
      <AppButton $small={small}><OutlookIcon s={28 * k} /></AppButton>
      <AppButton $small={small}><IeIcon s={29 * k} /></AppButton>
      <AppButton $small={small}><SkypeIcon s={30 * k} /></AppButton>
      <AppButton $small={small}><UiTile $small={small}>Ui</UiTile></AppButton>
      <AppButton $small={small}><UiTile $small={small} $light>Ui</UiTile></AppButton>
    </>
  );
};

const Orchestrator = () => (
  <ChromeWindow>
    <ChromeTitle>
      <ChromeTab>
        <MessengerIcon />
        <TabLabel>Messenger</TabLabel>
        <MdClose size={16} />
      </ChromeTab>
      <TabFavicon />
      <NewTab>
        <MdAdd size={21} />
      </NewTab>
      <ChromeControls>
        <MinIcon />
        <RestoreIcon />
        <CrossIcon />
      </ChromeControls>
    </ChromeTitle>
    <ChromeToolbar>
      <NavIcon><MdArrowBack size={21} /></NavIcon>
      <NavIcon $dim><MdArrowForward size={21} /></NavIcon>
      <NavIcon><MdRefresh size={23} /></NavIcon>
      <UrlPill>
        <MdLock size={16} />
        <UrlHost>platform.ui</UrlHost>
        <UrlTail>Aj...</UrlTail>
        <MdStarBorder size={21} color="#ccc" />
      </UrlPill>
      <Extensions>
        <WinLogo s={18} c="#00b4f0" />
        <ExtensionSlot $gap={22}><OrbIcon /></ExtensionSlot>
        <Separator />
        <PhotoIcon />
        <ExtensionSlot $gap={14}><MdMoreVert size={25} /></ExtensionSlot>
      </Extensions>
    </ChromeToolbar>
    <Bookmarks>
      <Bookmark $gap={10}>
        <AppsIcon />
        Aplikacje
      </Bookmark>
      <Bookmark $gap={9}>
        <MdPublic size={22} color="#e4e4e4" />
        Global Time &amp; E
      </Bookmark>
      <Bookmark $push $gap={11}>
        <GreenDot />
        Knowledge Home -...
      </Bookmark>
      <span>»</span>
    </Bookmarks>
    <PathHeader>
      <PathLogo>
        <PathLogoBox>Ui</PathLogoBox>
        <PathLogoName>Path</PathLogoName>
      </PathLogo>
      <FolderPicker>
        <FolderName>lder</FolderName>
        <MdKeyboardArrowDown size={27} />
      </FolderPicker>
      <HeaderIcon $gap={22}><MdHelp size={31} /></HeaderIcon>
      <HeaderIcon $gap={19}>
        <MdNotifications size={31} />
        <BellBadge />
      </HeaderIcon>
      <Avatar>AB</Avatar>
    </PathHeader>
    <PathBody>
      <Sidebar>
        {primaryNav.map((n) => (
          <NavItem key={n.label} $active={n.active}>
            <NavGlyph>{n.icon}</NavGlyph>
            {n.label}
          </NavItem>
        ))}
        <NavGroup>
          <NavGlyph><GlobeIcon /></NavGlyph>
          MANAGEMENT
          <Spacer $w={3} />
          <MdKeyboardArrowUp size={27} />
        </NavGroup>
        {managementNav.map((n) => (
          <NavItem key={n.label}>
            <NavGlyph>{n.icon}</NavGlyph>
            {n.label}
          </NavItem>
        ))}
        <LanguageBox>
          <LanguageIcon />
          <LanguageName>English</LanguageName>
          <Triangle $c="#bbb" $s={6} />
        </LanguageBox>
        <Legal>
          <span>© UiPath 2020</span>
          <span>Orchestrator 2020.1.16</span>
          <License>Community License</License>
        </Legal>
      </Sidebar>
      <ScrollTrack $w={10} $thumb={821} />
      <Main>
        <TableCard>
          <Fab><MdGetApp size={29} /></Fab>
          <TableHead>
            <HeadCell>EXCEPTION</HeadCell>
            <HeadRefresh><MdRefresh size={30} /></HeadRefresh>
          </TableHead>
          <TableRow />
          {rows.map((r, i) => (
            <TableRow key={i}>
              {r.status ? <Check /> : <span />}
              <Cell $strong>{r.status}</Cell>
              <Cell $strong>{r.reference}</Cell>
              <Cell>{r.status && "None"}</Cell>
              <Cell $strong>{r.status && "Normal"}</Cell>
              <Cell>{r.started}</Cell>
              <Cell>{r.ended}</Cell>
              <Cell>{r.robot}</Cell>
              <Cell>{r.exception}</Cell>
              <KebabMenu />
            </TableRow>
          ))}
        </TableCard>
      </Main>
      <ScrollTrack $w={9} $thumb={709} $round />
    </PathBody>
  </ChromeWindow>
);

const InternetExplorer = () => (
  <IeWindow>
    <IeTitle>
      <MinIcon />
      <MaxIcon />
      <CrossIcon />
    </IeTitle>
    <IeAddressRow>
      <BackButton><MdArrowBack size={34} color="#fff" stroke="#fff" strokeWidth={1} /></BackButton>
      <ForwardButton><ForwardOutline /></ForwardButton>
      <IeField $w={807} $pad={4}>
        <BabBubble w={15} c="#2f7fc9" />
        <IeUrl>
          <b>https</b>://en.<b>bab.la</b>/dictionary/polish-english/ddd
        </IeUrl>
        <Triangle $c="#777" $s={4.5} />
        <LockGap><MdLock size={21} /></LockGap>
        <ReloadIcon />
        <Spacer $w={7} />
      </IeField>
      <IeField $w={344} $pad={10}>
        <IeHint>Search...</IeHint>
        <LensIcon />
        <Spacer $w={8} />
        <Triangle $c="#777" $s={4.5} $end={11} />
      </IeField>
      <IeTools>
        <HomeOutline />
        <StarOutline />
        <GearOutline />
        <SmileyIcon />
      </IeTools>
    </IeAddressRow>
    <IeTabRow>
      <IeTab>
        <BabBubble w={15} c="#2f7fc9" />
        <IeTabText>ddd - English translation - ...</IeTabText>
        <MdClose size={15} color="#999" />
      </IeTab>
      <IeNewTab><NewTabIcon /></IeNewTab>
    </IeTabRow>
    <IeFavorites>
      <FavStar />
      <Spacer $w={7} />
      <HomeLink />
      <FavText>Home</FavText>
      <IePageIcon />
      <FavText>Log Out</FavText>
    </IeFavorites>
    <IeViewport>
      <IePage>
        <BabNav>
          <BabBrand>
            <BabBubble w={31} c="#fff" />
            <BabName>bab.la</BabName>
            <Triangle $end={19} />
          </BabBrand>
          <BabLink $active>Dictionary</BabLink>
          <BabLink>Conjugation</BabLink>
          <BabLink>Phrases</BabLink>
          <BabLink>Games</BabLink>
          <BabLink>
            More by bab.la
            <Triangle />
          </BabLink>
          <BabLocale>
            <MdPublic size={24} color="#dcebf8" />
            <Triangle />
          </BabLocale>
        </BabNav>
        <SearchRow>
          <SearchCell $w={104} $pad={12}>
            <MdKeyboardArrowDown size={23} />
            <Spacer $w={6} />
            <PlFlag />
            <Spacer $w={4} />
            <UkFlag />
          </SearchCell>
          <SearchCell $w={379} $pad={14}>
            <MdSearch size={25} />
            <Selected><span>ddd</span></Selected>
            <MdClose size={17} color="#111" />
            <Spacer $w={14} />
            <MdCancel size={20} />
            <Spacer $w={14} />
          </SearchCell>
          <SearchCell $w={53} $pad={14}>
            <MdKeyboard size={25} />
          </SearchCell>
          <SearchCell $w={133} $pad={14}>
            Translate
            <Spacer $w={5} />
            <MdArrowForward size={24} />
          </SearchCell>
          <SearchCell $w={10} $pad={0} />
        </SearchRow>
        <Crumbs>
          <span>bab.la</span>
          <span>Dictionary</span>
          <span>Polish-English</span>
          <span>D</span>
          <span>ddd</span>
        </Crumbs>
        <Card $top={148} $h={155}>
          <CardTag>"DDD" ENGLISH TRANSLATION</CardTag>
          <CardTitle>
            <PlFlag />
            "ddd" in English
          </CardTitle>
          <Definition>
            <b>ddd</b>
            <span>Our team was informed that the translation for "ddd" is missing.</span>
          </Definition>
        </Card>
        <RibbonCard $top={21} $h={300}>
          <Ribbon>MORE BY BAB.LA</Ribbon>
          <WordsTitle>Other dictionary words</WordsTitle>
          <WordList>
            <PlFlag />
            <div>
              {wordLines.map((line, li) => (
                <div key={li}>
                  {line.map((w, i) => (
                    <React.Fragment key={w}>
                      <Word $current={w === "ddd"}>{w}</Word>
                      {(i < line.length - 1 || li === 1) && " · "}
                    </React.Fragment>
                  ))}
                </div>
              ))}
            </div>
          </WordList>
        </RibbonCard>
      </IePage>
      <IeScroll>
        <ScrollChevron up />
        <IeThumb />
        <ScrollChevron />
      </IeScroll>
    </IeViewport>
  </IeWindow>
);

export default function App() {
  return (
    <Desktop>
      <GlobalStyle />
      <Monitor>
        <Orchestrator />
        <Taskbar>
          <TaskbarApps />
          <Tray>
            <TrayIcon $gap={0}><PeopleTray /></TrayIcon>
            <TrayIcon $gap={27}><ChevronTray /></TrayIcon>
            <TrayIcon $gap={11}><BatteryTray /></TrayIcon>
            <TrayIcon $gap={10}><VolumeTray /></TrayIcon>
            <TrayIcon $gap={12}><WifiTray /></TrayIcon>
            <InputLang>POL</InputLang>
            <Clock>
              <div>11:40</div>
              <div>2020-02-10</div>
            </Clock>
            <TrayIcon $gap={4}>
              <Notifications>
                <NotifTray />
                <NotifCount>11</NotifCount>
              </Notifications>
            </TrayIcon>
            <ShowDesktop />
          </Tray>
        </Taskbar>
        <InternetExplorer />
      </Monitor>
      <Monitor>
        <Taskbar $small>
          <TaskbarApps small />
          <Tray>
            <Clock $small>
              <div>11:40</div>
              <div>2020-02-10</div>
            </Clock>
          </Tray>
        </Taskbar>
      </Monitor>
    </Desktop>
  );
}
